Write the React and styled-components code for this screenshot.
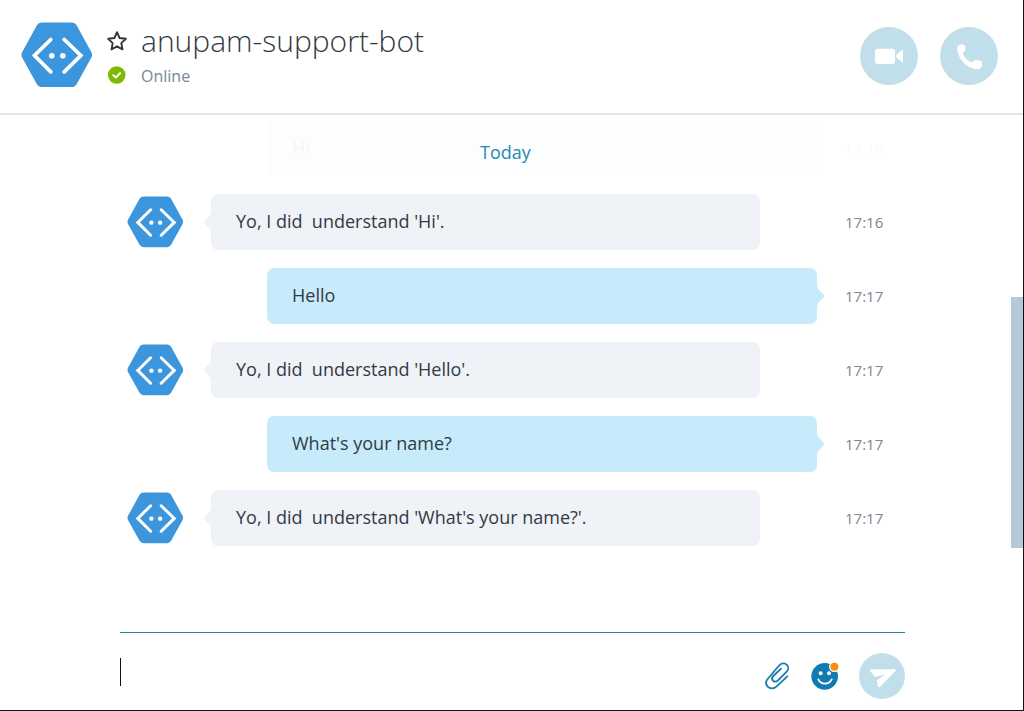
import React from "react";
import styled, { createGlobalStyle, css } from "styled-components";

const GlobalStyle = createGlobalStyle`
  *, *::before, *::after {
    box-sizing: border-box;
  }
  body {
    margin: 0;
    background: #fff;
    color: #333a42;
    font-family: "Segoe UI", "Open Sans", "Noto Sans", sans-serif;
  }
`;

const messages = [
  { id: 1, from: "me", text: "Hi", time: "17:16", faded: true },
  { id: 2, from: "bot", text: "Yo, I did  understand 'Hi'.", time: "17:16" },
  { id: 3, from: "me", text: "Hello", time: "17:17" },
  { id: 4, from: "bot", text: "Yo, I did  understand 'Hello'.", time: "17:17" },
  { id: 5, from: "me", text: "What's your name?", time: "17:17" },
  {
    id: 6,
    from: "bot",
    text: "Yo, I did  understand 'What's your name?'.",
    time: "17:17",
  },
];

const Window = styled.div`
  display: flex;
  flex-direction: column;
  height: 100vh;
  border-right: 1px solid #111;
  border-bottom: 1px solid #111;
`;

const Header = styled.header`
  display: flex;
  align-items: flex-start;
  padding: 22px 25px 24px 21px;
  border-bottom: 2px solid #dfe7ec;
`;

const Contact = styled.div`
  flex: 1;
  display: grid;
  grid-template-columns: 22px 1fr;
  grid-template-rows: 38px 26px;
  gap: 3px 13px;
  align-items: center;
  margin-left: 13px;
`;

const Name = styled.h1`
  margin: 0;
  font-size: 30px;
  font-weight: 300;
  line-height: 38px;
`;

const Status = styled.p`
  margin: 0;
  font-size: 16px;
  line-height: 24px;
  color: #7a8794;
`;

const IconButton = styled.button`
  display: flex;
  align-items: center;
  justify-content: center;
  padding: 0;
  border: 0;
  background: none;
  cursor: pointer;
`;

const CallActions = styled.div`
  display: flex;
  gap: 22px;
  padding-top: 5px;
`;

const RoundButton = styled(IconButton)`
  width: ${({ $size }) => $size}px;
  height: ${({ $size }) => $size}px;
  border-radius: 50%;
  background: #c1deeb;
`;

const Body = styled.main`
  flex: 1;
  display: flex;
  min-height: 0;
`;

const Conversation = styled.section`
  position: relative;
  flex: 1;
  overflow: hidden;
`;

const DayLabel = styled.div`
  position: absolute;
  top: 25px;
  left: 0;
  right: 0;
  font-size: 18px;
  line-height: 24px;
  text-align: center;
  color: #2a87b0;
`;

const MessageList = styled.ul`
  display: flex;
  flex-direction: column;
  gap: 18px;
  margin: 0;
  padding: 5px 128px 0 127px;
  list-style: none;
`;

const Row = styled.li`
  display: grid;
  grid-template-columns: 56px 1fr 38px;
  gap: 28px;
  align-items: center;
  opacity: ${({ $faded }) => ($faded ? 0.05 : 1)};
`;

const Bubble = styled.div`
  position: relative;
  grid-column: 2;
  padding: 15px 25px 17px;
  border-radius: 7px;
  font-size: 18px;
  line-height: 24px;
  white-space: pre-wrap;

  &::after {
    content: "";
    position: absolute;
    top: 17px;
    width: 7px;
    height: 22px;
    background: inherit;
  }

  ${({ $mine }) =>
    $mine
      ? css`
          margin-left: 56px;
          background: #c7ebfb;
          &::after {
            left: 100%;
            clip-path: polygon(0 0, 15% 18%, 100% 45%, 100% 55%, 15% 82%, 0 100%);
          }
        `
      : css`
          margin-right: 57px;
          background: #eff2f7;
          &::after {
            right: 100%;
            clip-path: polygon(100% 0, 85% 18%, 0 45%, 0 55%, 85% 82%, 100% 100%);
          }
        `}
`;

const Time = styled.time`
  grid-column: 3;
  font-size: 15px;
  line-height: 24px;
  color: #7a8794;
`;

const ScrollTrack = styled.div`
  flex: none;
  width: 12px;
  padding-top: 182px;
`;

const ScrollThumb = styled.div`
  height: 251px;
  background: #b5c9da;
`;

const Composer = styled.form`
  display: flex;
  align-items: center;
  margin: 0 118px 0 120px;
  padding: 20px 0 11px;
  border-top: 1px solid #2f7fa5;
`;

const Entry = styled.div`
  flex: 1;
  display: flex;
  align-items: center;
  padding-bottom: 8px;
`;

const Caret = styled.span`
  width: 1px;
  height: 28px;
  background: #111;
`;

const MessageInput = styled.input`
  flex: 1;
  min-width: 0;
  height: 38px;
  padding: 0;
  border: 0;
  outline: 0;
  font: inherit;
  font-size: 18px;
  caret-color: transparent;
`;

const Tools = styled.div`
  display: flex;
  align-items: center;
  gap: 19px;
`;

const BotAvatar = ({ width, height }) => (
  <svg width={width} height={height} viewBox="0 0 72 66" aria-hidden="true">
    <path
      d="M6.5 32.8 21 6.5h29.5L65 32.8 50.5 59H21Z"
      fill="#3b96dd"
      stroke="#3b96dd"
      strokeWidth="12"
      strokeLinejoin="round"
    />
    <path
      d="M29.8 17.5 13.5 33.5 29.8 49.8M43.2 17.5 59.8 33.5 43.2 49.8"
      fill="none"
      stroke="#fff"
      strokeWidth="3.8"
      strokeLinecap="round"
    />
    <circle cx="30.8" cy="33.8" r="2.8" fill="#fff" />
    <circle cx="41.8" cy="33.8" r="2.8" fill="#fff" />
  </svg>
);

const StarIcon = () => (
  <svg width="22" height="22" viewBox="0 0 22 22" aria-hidden="true">
    <path
      d="M11 2.2 13.6 8l6.3.8-4.6 4.3 1.2 6.3L11 16.3l-5.5 3.1 1.2-6.3L2.1 8.8 8.4 8Z"
      fill="none"
      stroke="#33373c"
      strokeWidth="1.9"
      strokeLinejoin="round"
    />
  </svg>
);

const OnlineIcon = () => (
  <svg width="22" height="22" viewBox="0 0 22 22" aria-hidden="true">
    <circle cx="10.7" cy="10" r="8.8" fill="#7fba00" />
    <path
      d="m7.3 10.2 2.5 2.3 4.3-4.2"
      fill="none"
      stroke="#fff"
      strokeWidth="2"
      strokeLinecap="round"
      strokeLinejoin="round"
    />
  </svg>
);

const VideoIcon = () => (
  <svg width="58" height="58" viewBox="60 82 174 174" aria-hidden="true">
    <rect x="105" y="147" width="60" height="46" rx="8" fill="#fff" />
    <path d="M169 165 187 151q2-1 2 2v33q0 3-2 2l-18-14Z" fill="#fff" />
  </svg>
);

const PhoneIcon = () => (
  <svg width="58" height="58" viewBox="300 82 174 174" aria-hidden="true">
    <path
      d="M352 146C352 137 360 134 367 134C376 135 377 143 376 150C375 156 369 156 369 161C371 171 383 184 394 188C399 189 400 182 406 181C413 180 426 182 426 190C427 200 423 209 412 209C385 209 352 180 352 146Z"
      fill="#fff"
    />
  </svg>
);

const ClipIcon = () => (
  <svg width="28" height="30" viewBox="68 106 84 90" aria-hidden="true">
    <path
      d="M141 152 109 182C101 190 89 190 82 183C76 176 76 167 82 160L115 121C122 112 133 111 139 117C145 123 145 132 139 138L113 164C108 169 101 169 98 165C94 161 95 155 99 151L122 129"
      fill="none"
      stroke="#1a7bae"
      strokeWidth="5.5"
      strokeLinecap="round"
      strokeLinejoin="round"
    />
  </svg>
);

const SmileIcon = () => (
  <svg width="30" height="30" viewBox="211 106 90 90" aria-hidden="true">
    <circle cx="255" cy="152" r="40" fill="#107bb0" />
    <circle cx="243" cy="143" r="6" fill="#fff" />
    <circle cx="268" cy="143" r="6" fill="#fff" />
    <path
      d="M236 161C244 178 268 178 276 161"
      fill="none"
      stroke="#fff"
      strokeWidth="5.5"
      strokeLinecap="round"
    />
    <circle cx="284" cy="123" r="16" fill="#fff" />
    <circle cx="284" cy="123" r="12" fill="#ff8c0a" />
  </svg>
);

const SendIcon = () => (
  <svg width="46" height="46" viewBox="357 83 138 138" aria-hidden="true">
    <path
      d="M393 132H464Q470 133 466 138L420 184Q415 187 413 181L411 165 436 147 405 155 391 138Q389 133 393 132Z"
      fill="#fff"
    />
  </svg>
);

const Message = ({ from, text, time, faded }) => (
  <Row $faded={faded}>
    {from === "bot" && <BotAvatar width={57} height={52} />}
    <Bubble $mine={from === "me"}>{text}</Bubble>
    <Time>{time}</Time>
  </Row>
);

const App = () => {
  return (
    <Window>
      <GlobalStyle />
      <Header>
        <BotAvatar width={72} height={66} />
        <Contact>
          <IconButton type="button" aria-label="Add to favourites">
            <StarIcon />
          </IconButton>
          <Name>anupam-support-bot</Name>
          <OnlineIcon />
          <Status>Online</Status>
        </Contact>
        <CallActions>
          <RoundButton type="button" $size={58} aria-label="Video call">
            <VideoIcon />
          </RoundButton>
          <RoundButton type="button" $size={58} aria-label="Call">
            <PhoneIcon />
          </RoundButton>
        </CallActions>
      </Header>
      <Body>
        <Conversation>
          <MessageList>
            {messages.map(({ id, ...message }) => (
              <Message key={id} {...message} />
            ))}
          </MessageList>
          <DayLabel>Today</DayLabel>
        </Conversation>
        <ScrollTrack>
          <ScrollThumb />
        </ScrollTrack>
      </Body>
      <Composer onSubmit={(e) => e.preventDefault()}>
        <Entry>
          <Caret />
          <MessageInput type="text" aria-label="Type a message" />
        </Entry>
        <Tools>
          <IconButton type="button" aria-label="Attach a file">
            <ClipIcon />
          </IconButton>
          <IconButton type="button" aria-label="Emoticons">
            <SmileIcon />
          </IconButton>
          <RoundButton type="submit" $size={46} aria-label="Send">
            <SendIcon />
          </RoundButton>
        </Tools>
      </Composer>
    </Window>
  );
};

export default App;
